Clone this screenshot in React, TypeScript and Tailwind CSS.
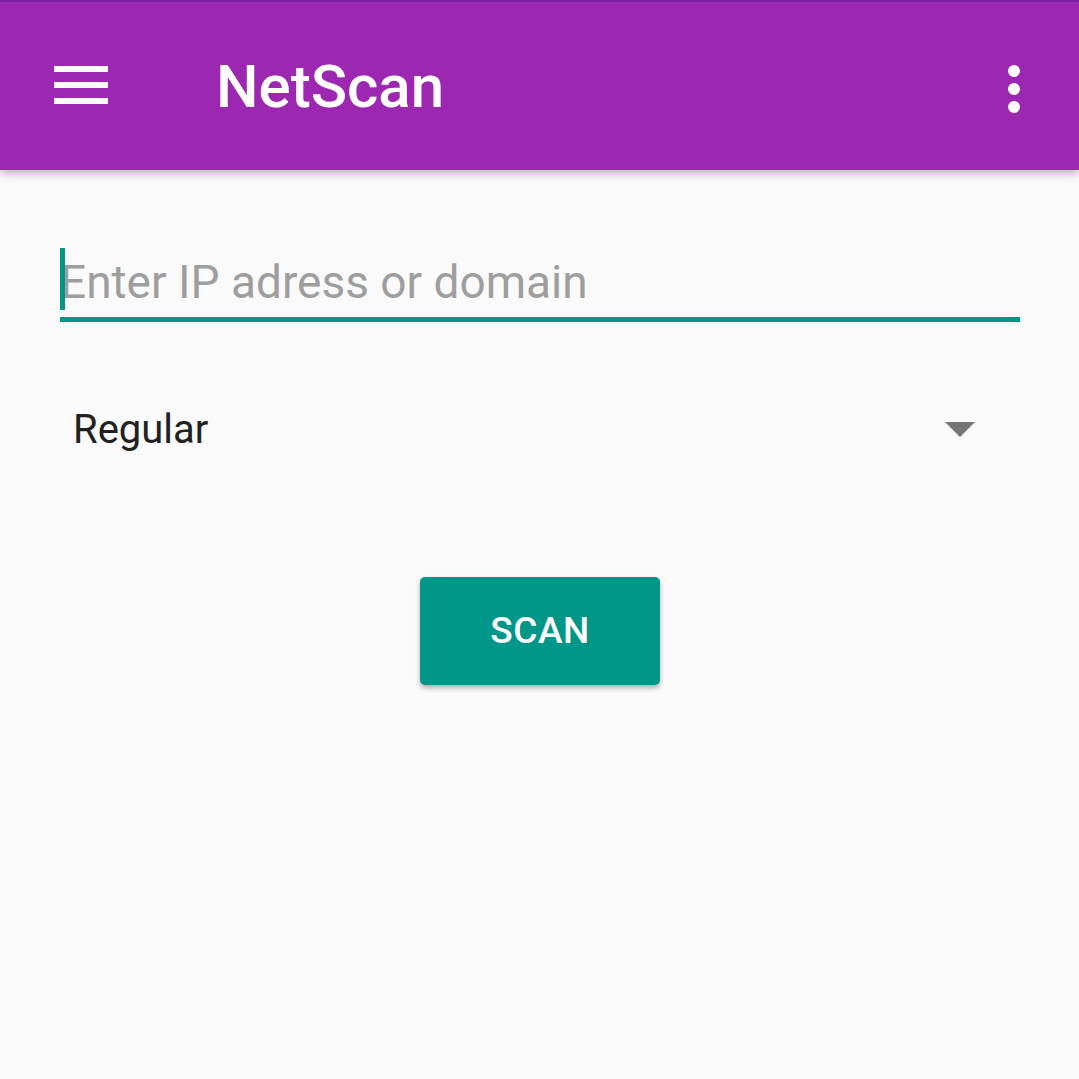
import React from "react";

export default function App() {
  return (
    <div
      className="w-[1079px] h-[1079px] bg-[#fafafa] flex flex-col overflow-hidden"
      style={{ fontFamily: "Roboto, 'Noto Sans', sans-serif" }}
    >
      {/* toolbar */}
      <div className="relative z-10 h-[170px] bg-[#9c27b0] border-t-2 border-[#7b1fa2] shadow-[0_4px_8px_rgba(0,0,0,0.25)] flex items-center">
        <div className="ml-[54px] w-[54px] flex flex-col gap-[10px] -mt-[3px]">
          <span className="block h-[6px] bg-white" />
          <span className="block h-[6px] bg-white" />
          <span className="block h-[6px] bg-white" />
        </div>
        <h1 className="ml-[108px] text-white text-[60px] font-medium leading-none mt-[2px]">
          NetScan
        </h1>
        <div className="ml-auto mr-[59px] flex flex-col gap-[6px] mt-[5px]">
          <span className="block w-[12px] h-[12px] rounded-full bg-white" />
          <span className="block w-[12px] h-[12px] rounded-full bg-white" />
          <span className="block w-[12px] h-[12px] rounded-full bg-white" />
        </div>
      </div>

      <div className="px-[60px] pt-[78px] w-[1080px]">
        {/* input */}
        <div className="relative w-[960px] h-[74px] border-b-[5px] border-[#009688]">
          <span className="absolute left-0 top-0 w-[5px] h-[62px] bg-[#009688]" />
          <input
            className="w-full h-[64px] bg-transparent outline-none text-[46px] text-[#212121] placeholder:text-[#9e9e9e] pl-0 pt-[4px]"
            placeholder="Enter IP adress or domain"
          />
        </div>

        {/* spinner */}
        <div className="mt-[78px] flex items-center justify-between pl-[13px] pr-[45px] h-[60px]">
          <span className="text-[40px] text-[#212121] leading-none">Regular</span>
          <svg width="30" height="16" viewBox="0 0 30 16">
            <path d="M0 0 H30 L15 15 Z" fill="#757575" />
          </svg>
        </div>

        {/* button */}
        <div className="mt-[117px] flex justify-center">
          <button className="w-[240px] h-[108px] rounded-[5px] bg-[#009688] text-white text-[37px] font-medium tracking-[0.5px] shadow-[0_3px_5px_rgba(0,0,0,0.3)]">
            SCAN
          </button>
        </div>
      </div>
    </div>
  );
}
